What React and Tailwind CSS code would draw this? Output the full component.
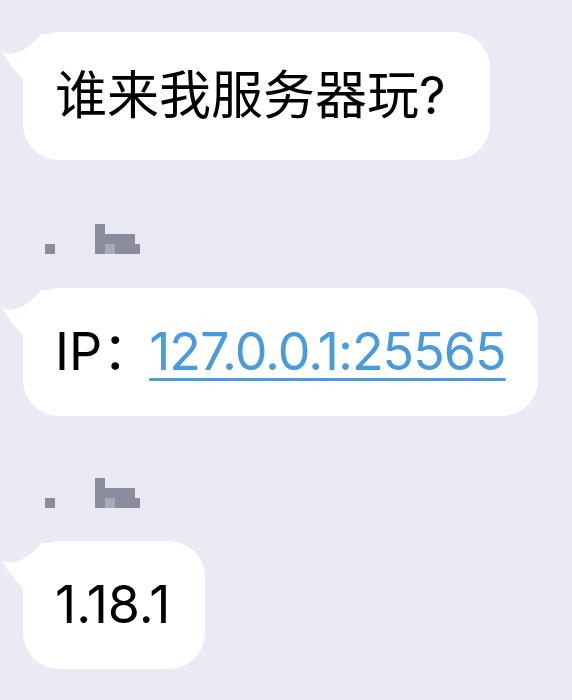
import React from "react";

const font = { fontFamily: 'Inter, "Noto Sans CJK SC", sans-serif' };

// bubble tail on the upper left
const Tail = () => (
  <svg className="absolute left-[-23px] top-0" width="50" height="60" viewBox="0 0 50 60">
    <path d="M1 19 C 8 24, 22 24, 42 2 L 50 2 L 50 60 L 24 60 L 24 48 C 16 40, 8 30, 1 19 Z" fill="#ffffff" />
  </svg>
);

const Bubble = ({ children, className = "" }) => (
  <div className={`relative self-start bg-white rounded-[36px] h-[128px] flex items-center pl-8 ${className}`}>
    <Tail />
    <div className="relative text-[52px] leading-none text-black whitespace-nowrap">{children}</div>
  </div>
);

// pixelated sender name
const Name = ({ className = "" }) => (
  <div className={`flex items-end gap-[40px] h-[30px] pl-[45px] ${className}`}>
    <div className="w-[10px] h-[10px] bg-[#8b8c9d]" />
    <div className="flex items-end">
      <div className="w-[10px] h-[30px] bg-[#8b8c9d]" />
      <div className="flex flex-col">
        <div className="w-[10px] h-[10px] bg-[#8b8c9d]" />
        <div className="w-[10px] h-[10px] bg-[#a9aab9]" />
      </div>
      <div className="w-[20px] h-[20px] bg-[#8b8c9d]" />
      <div className="w-[5px] h-[10px] bg-[#8b8c9d]" />
    </div>
  </div>
);

export default function App() {
  return (
    <div className="w-[572px] h-[700px] overflow-hidden bg-[#e9eaf4] flex flex-col pt-8 pl-[23px]" style={font}>
      <Bubble className="pr-[44px]">谁来我服务器玩?</Bubble>
      <Name className="mt-16 -ml-[23px]" />
      <Bubble className="mt-[34px] pr-8">
        IP：<span className="-ml-[5px] text-[#4a9bdc] tracking-[-1px] underline decoration-[3px] underline-offset-[8px]">127.0.0.1:25565</span>
      </Bubble>
      <Name className="mt-[62px] -ml-[23px]" />
      <Bubble className="mt-[33px] pr-[35px]">1.18.1</Bubble>
    </div>
  );
}
